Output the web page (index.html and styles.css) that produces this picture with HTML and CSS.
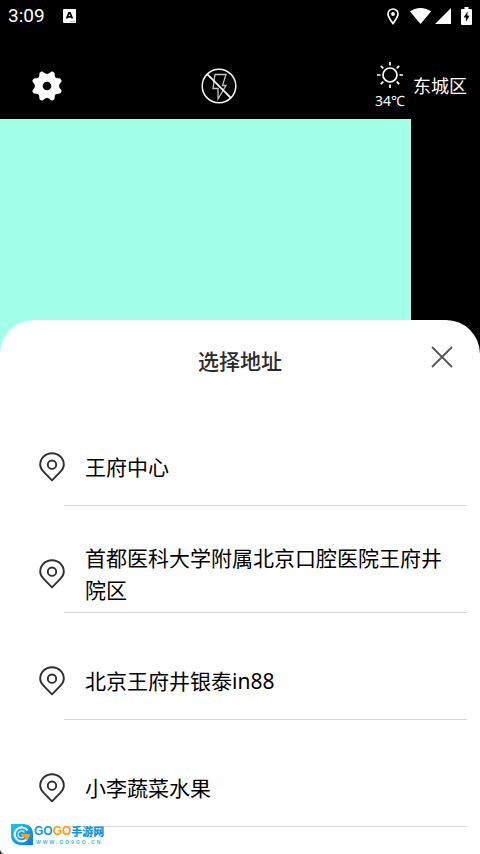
FILE: index.html
```html
<!DOCTYPE html>
<html lang="zh-CN">
<head>
<meta charset="utf-8">
<meta name="viewport" content="width=device-width, initial-scale=1">
<title>选择地址</title>
<link rel="stylesheet" href="styles.css">
</head>
<body>
<svg class="defs" aria-hidden="true">
  <symbol id="pin" viewBox="0 0 26 30">
    <path d="M13 28.3 4.7 19.8C2.4 17.5 1.2 15.2 1.2 12.7 1.2 6.300 6.500 1.200 13 1.200s11.800 5.100 11.800 11.500c0 2.500-1.200 4.800-3.500 7.100Z" fill="none" stroke="currentColor" stroke-width="1.900" stroke-linejoin="round"/>
    <circle cx="13" cy="12.700" r="4.200" fill="none" stroke="currentColor" stroke-width="1.900"/>
  </symbol>
</svg>
<div class="screen">
  <div class="status">
    <span class="time">3:09</span>
    <svg class="app-badge" width="13" height="14" viewBox="0 0 13 14" aria-hidden="true">
      <rect width="13" height="14" rx="1" fill="#fff"/>
      <path d="M3.600 9.500 6 3.800h1L9.400 9.500M4.500 7.800h4" fill="none" stroke="#000" stroke-width="1.700"/>
      <path d="M7 12.300h5" stroke="#999" stroke-width=".8"/>
    </svg>
    <div class="signals">
      <svg width="12" height="17" viewBox="0 0 12 17" aria-hidden="true">
        <path d="M6 15.500C3.500 12 1 9 1 6a5 5 0 0 1 10 0c0 3-2.500 6-5 9.500Z" fill="none" stroke="#fff" stroke-width="1.700"/>
        <circle cx="6" cy="6" r="1.900" fill="#fff"/>
      </svg>
      <svg class="wifi" width="21" height="16" viewBox="0 0 21 16" aria-hidden="true"><path d="M10.500 16 0 3.500Q4.500 0 10.500 0T21 3.500Z" fill="#fff"/></svg>
      <svg class="cell" width="16" height="16" viewBox="0 0 16 16" aria-hidden="true"><path d="M16 0v16H0Z" fill="#fff"/></svg>
      <svg class="battery" width="11" height="18" viewBox="0 0 11 18" aria-hidden="true">
        <path d="M3.500 0h4v2H10q1 0 1 1v14q0 1-1 1H1q-1 0-1-1V3q0-1 1-1h2.500Z" fill="#fff"/>
        <path d="M6.500 4.500 2.600 10.500h2.300v4.500l3.600-6.200H6.500Z" fill="#000"/>
      </svg>
    </div>
  </div>
  <header class="toolbar">
    <button class="icon-button" type="button" aria-label="设置">
      <svg width="30" height="30" viewBox="0 0 30 30">
        <path fill="#fff" fill-rule="evenodd" d="M8.900.7Q10.500-.1 11.800 1.500Q15 4.400 18.200 1.500Q19.500-.1 21.100.700Q23 1.500 22.700 3.500Q22.400 7.600 26.500 7.300Q28.500 7 29.300 8.900Q30.100 10.500 28.500 11.800Q25.600 15 28.500 18.200Q30.100 19.500 29.300 21.100Q28.500 23 26.500 22.700Q22.400 22.400 22.700 26.500Q23 28.500 21.100 29.300Q19.500 30.100 18.200 28.500Q15 25.600 11.800 28.500Q10.500 30.100 8.900 29.300Q7 28.500 7.300 26.500Q7.600 22.400 3.500 22.700Q1.500 23 .7 21.100Q-.1 19.500 1.500 18.200Q4.400 15 1.500 11.800Q-.1 10.500.7 8.900Q1.500 7 3.500 7.300Q7.600 7.600 7.300 3.500Q7 1.500 8.900.7ZM15 10.700a4.300 4.300 0 1 0 0 8.600a4.300 4.300 0 1 0 0-8.600Z"/>
      </svg>
    </button>
    <button class="icon-button" type="button" aria-label="闪光灯已关闭">
      <svg width="36" height="36" viewBox="0 0 36 36" fill="none">
        <circle cx="18" cy="18" r="16.800" stroke="#f4f4f4" stroke-width="1.500"/>
        <path d="M14 6.500h11l-3.500 11H25L17 31V20.500h-5Z" stroke="#c4c4c4" stroke-width="1.300"/>
        <path d="M6.200 6.200 29.800 29.800" stroke="#fff" stroke-width="1.700"/>
      </svg>
    </button>
    <div class="weather">
      <div class="reading">
        <svg width="28" height="28" viewBox="0 0 28 28" fill="none" stroke="#fff" stroke-width="1.700" aria-hidden="true">
          <circle cx="14" cy="14" r="7"/>
          <path d="M14 1v3.500M14 23.500V27M1 14h3.500M23.500 14H27M4.800 4.800l2.500 2.500M20.700 20.700l2.500 2.500M4.800 23.200l2.500-2.500M20.700 7.300l2.500-2.500"/>
        </svg>
        <span class="degrees">34℃</span>
      </div>
      <span class="district">东城区</span>
    </div>
  </header>
  <div class="preview"><div class="frame"></div></div>
  <main class="sheet">
    <div class="sheet-head">
      <h1>选择地址</h1>
      <button class="close" type="button" aria-label="关闭">
        <svg width="22" height="22" viewBox="0 0 22 22"><path d="m1 1 20 20M21 1 1 21" stroke="#555" stroke-width="1.800"/></svg>
      </button>
    </div>
    <ul class="places">
      <li><button class="place" type="button"><svg class="pin"><use href="#pin"/></svg><span>王府中心</span></button></li>
      <li><button class="place" type="button"><svg class="pin"><use href="#pin"/></svg><span>首都医科大学附属北京口腔医院王府井院区</span></button></li>
      <li><button class="place" type="button"><svg class="pin"><use href="#pin"/></svg><span>北京王府井银泰in88</span></button></li>
      <li><button class="place" type="button"><svg class="pin"><use href="#pin"/></svg><span>小李蔬菜水果</span></button></li>
    </ul>
  </main>
  <div class="watermark">
    <svg width="22" height="21" viewBox="0 0 22 21" aria-hidden="true">
      <defs><linearGradient id="blue" x2="1" y2="1"><stop stop-color="#20c4ee"/><stop offset="1" stop-color="#087ed0"/></linearGradient></defs>
      <path d="M0 0h13q9 1 9 10v11H9Q0 20 0 11Z" fill="url(#blue)"/>
      <path d="M16.500 6.500A7 7 0 1 0 16 15" fill="none" stroke="#e6faff" stroke-width="2.200"/>
      <path d="M13.500 8.500A3.500 3.500 0 1 0 13 13" fill="none" stroke="#bcecfb" stroke-width="1.300"/>
      <path d="M10 10h9q0 4-4 6l-1-3h-3Z" fill="#ff9d16"/>
    </svg>
    <div class="brand">
      <div class="name"><span class="go">GO</span><span class="go orange">GO</span><span class="cn">手游网</span></div>
      <div class="url">WWW.GO9GO.CN</div>
    </div>
  </div>
  <svg class="corner" width="4" height="4" viewBox="0 0 4 4" aria-hidden="true"><path d="M0 0q1 3 4 4H0Z" fill="#333"/></svg>
</div>
</body>
</html>
```
FILE: styles.css
```css
* { box-sizing: border-box; }

body {
  margin: 0;
  background: #000;
  font-family: "Noto Sans", "Noto Sans CJK SC", sans-serif;
}

button {
  padding: 0;
  border: 0;
  background: none;
  color: inherit;
  font: inherit;
  cursor: pointer;
}

svg { display: block; flex: none; }

.defs { position: absolute; width: 0; height: 0; }

.screen {
  position: relative;
  display: flex;
  flex-direction: column;
  min-height: 100vh;
  overflow: hidden;
}

.status {
  display: flex;
  align-items: center;
  height: 32px;
  padding: 0 8px;
  color: #fff;
}

.time {
  font: 400 19px/32px Roboto, sans-serif;
}

.app-badge { margin-left: 18px; }

.signals {
  display: flex;
  align-items: center;
  margin-left: auto;
}

.wifi { margin-left: 11px; }
.cell { margin-left: 4px; }
.battery { margin-left: 10px; }

.toolbar {
  display: flex;
  align-items: center;
  justify-content: space-between;
  height: 87px;
  padding: 20px 13px 0 32px;
  color: #fff;
}

.weather {
  display: flex;
  align-items: center;
  gap: 8px;
}

.reading {
  display: flex;
  flex-direction: column;
  align-items: center;
  gap: 2px;
}

.degrees { font-size: 14px; line-height: 20px; }
.district { font-size: 18px; line-height: 24px; }

.preview { height: 240px; }

.frame {
  width: 85.700%;
  height: 100%;
  background: #a2ffe8;
}

.sheet {
  flex: 1;
  margin-top: -39px;
  border-radius: 34px 34px 0 0;
  background: #fff;
  color: #111;
}

.sheet-head {
  display: grid;
  grid-template-columns: 1fr auto 1fr;
  align-items: center;
  height: 79px;
  padding: 0 27px;
}

h1 {
  grid-column: 2;
  margin: 2px 0 0;
  color: #2b2b2b;
  font-size: 21px;
  font-weight: 500;
  line-height: 32px;
}

.close { justify-self: end; margin-bottom: 6px; }

.places {
  margin: 0;
  padding: 0 13px 0 39px;
  list-style: none;
}

.place {
  display: flex;
  align-items: center;
  gap: 20px;
  width: 100%;
  height: 107px;
  padding: 28px 12px 0 0;
  color: #000;
  font-size: 21px;
  line-height: 32px;
  text-align: left;
}

.places li { position: relative; }

.places li::after {
  content: "";
  position: absolute;
  right: 0;
  bottom: 0;
  left: 25px;
  height: 1px;
  background: #d8d8d8;
}

.pin { width: 26px; height: 30px; color: #303030; }

.watermark {
  position: absolute;
  bottom: 9px;
  left: 11px;
  display: flex;
  align-items: center;
  gap: 1px;
}

.name {
  display: flex;
  align-items: center;
  height: 15px;
  font-weight: 900;
}

.go {
  color: #139be2;
  font: bold 12px/15px "Liberation Sans Narrow", "Liberation Sans", sans-serif;
}

.orange { color: #ff9e0b; }

.cn {
  color: #1593dd;
  font-size: 11px;
  line-height: 15px;
}

.url {
  height: 6px;
  color: #43b7eb;
  font: bold 5px/6px "Liberation Sans", sans-serif;
  text-align: center;
  letter-spacing: 2px;
}

.corner { position: absolute; bottom: 0; left: 0; }
```
